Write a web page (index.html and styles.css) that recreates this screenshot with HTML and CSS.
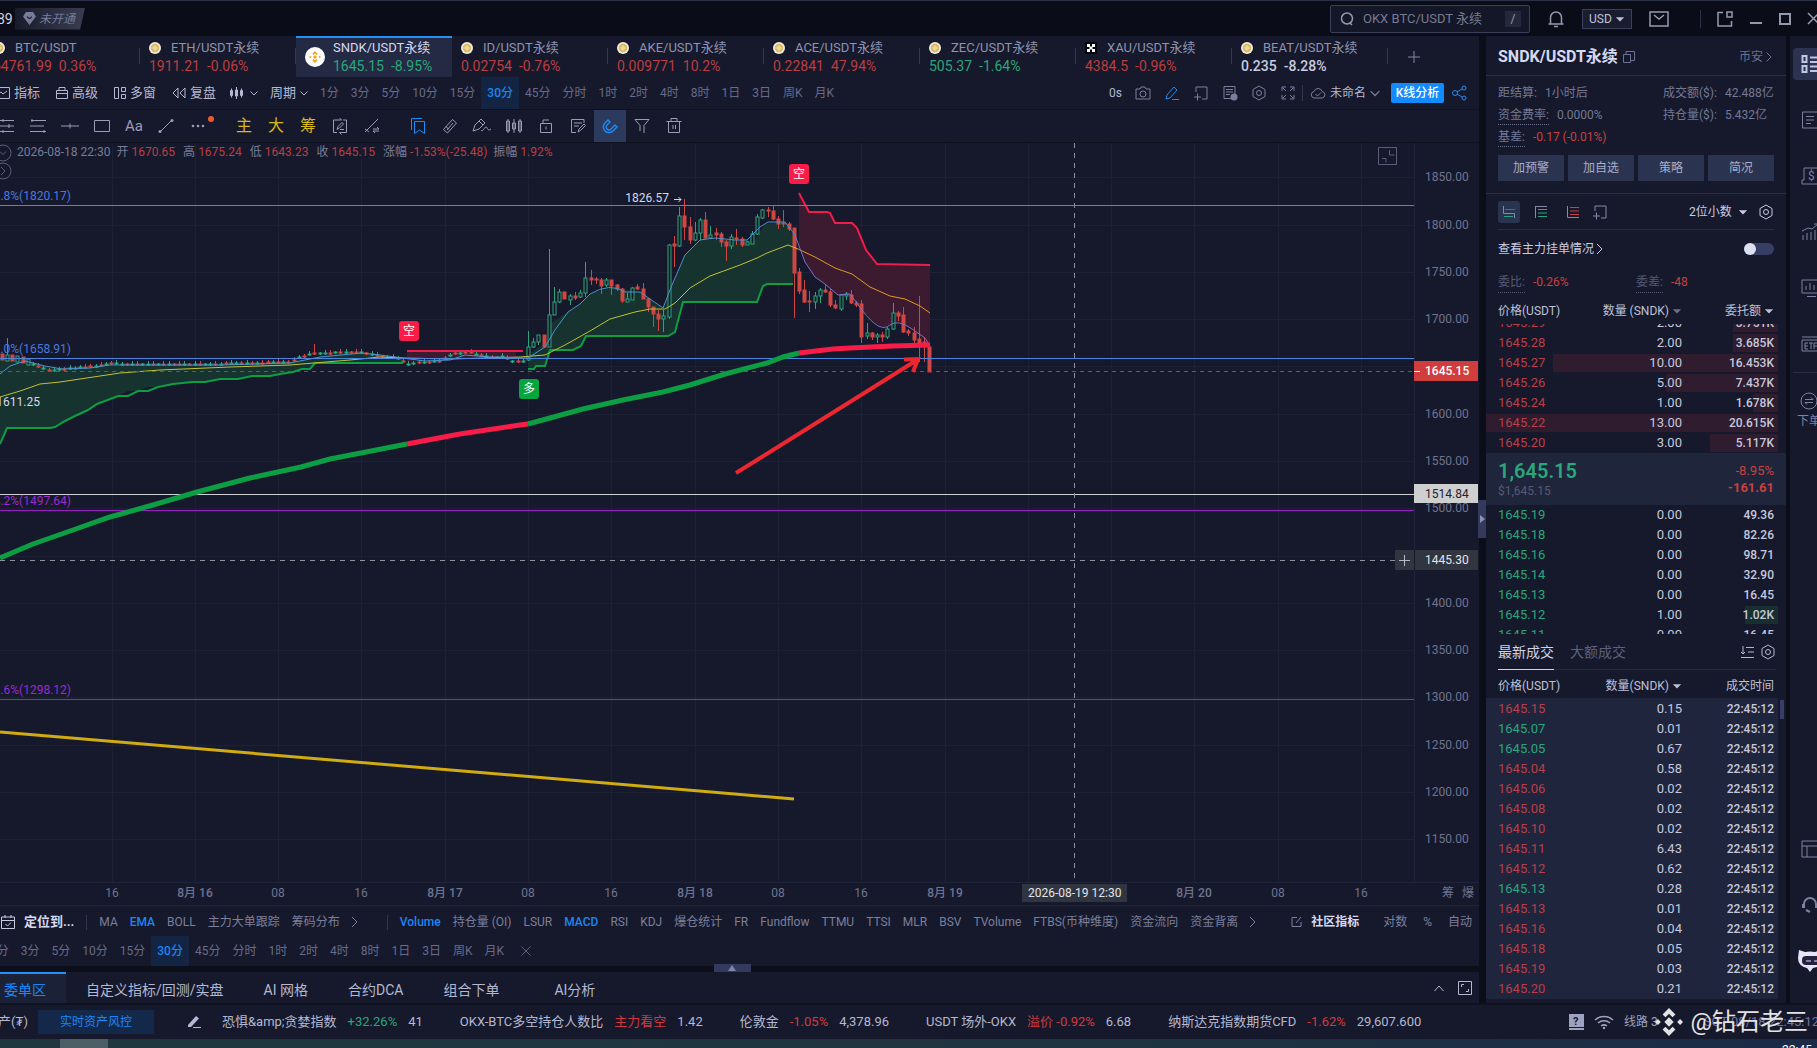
FILE: index.html
```html
<!DOCTYPE html>
<html lang="zh-CN">
<head>
  <meta charset="UTF-8" />
  <meta name="viewport" content="width=device-width, initial-scale=1.0" />
  <title>SNDK/USDT永续</title>
  <link rel="stylesheet" href="styles.css">
</head>
<body>
  <svg class="sprite" aria-hidden="true">
    <symbol id="i-chev" viewBox="0 0 8 8"><path d="M0.5 2.5l3.5 3.5l3.5-3.5" /></symbol>
    <symbol id="i-next" viewBox="0 0 8 14"><path d="M1 2l5 5l-5 5" /></symbol>
    <symbol id="i-arrow" viewBox="0 0 12 8"><path class="solid" d="M1 2h10l-5 5z" /></symbol>
    <symbol id="i-hex" viewBox="0 0 16 16"><path d="M8 1l6 3.5v7L8 15l-6-3.5v-7z" /><circle cx="8" cy="8" r="2.5" /></symbol>
    <symbol id="i-edit" viewBox="0 0 16 16"><path d="M2 14l1-4l7-8l3 3l-7 8zM8 14.500h7" /></symbol>
    <symbol id="i-addbox" viewBox="0 0 16 16"><path d="M3 7V2h11v12H9M1 12h7M4.500 8.500v7" /></symbol>
    <symbol id="i-coin" viewBox="0 0 20 20"><circle cx="10" cy="10" r="10" fill="#f1ecdc" stroke="none" /><circle cx="10" cy="10" r="7" fill="#dcb85c" stroke="none" /><path d="M10 5l5 5l-5 5l-5-5z" fill="#e9d9a4" stroke="none" /></symbol>
    <symbol id="i-bnb" viewBox="0 0 24 24"><path class="solid" d="M12 0l5.500 5.500l-2.500 2.500l-3-3l-3 3l-2.500-2.500zM12 24l5.500-5.500l-2.500-2.500l-3 3l-3-3l-2.500 2.500zM2.500 9.500L5 12l-2.500 2.500L0 12zM21.500 9.500L24 12l-2.500 2.500L19 12zM12 8l4 4l-4 4l-4-4z" /></symbol>
  </svg>

  <div class="app">
    <header class="titlebar">
      <span class="uid">89</span>
      <span class="vip"><svg width="13" height="13" viewBox="0 0 13 13"><path class="solid" fill-rule="evenodd" d="M3 0h7l3 4.500L6.500 13L0 4.500zM4 4l2.500 2l2.500-2v1.500L6.500 7.500L4 5.500z" /></svg><span>未开通</span></span>
      <label class="search">
        <svg width="16" height="16" viewBox="0 0 16 16"><circle cx="8" cy="7.500" r="5.500" stroke-width="1.500" /><path d="M11 12l2 2" stroke-width="1.500" /></svg>
        <input type="text" placeholder="OKX BTC/USDT 永续" aria-label="搜索">
        <kbd>/</kbd>
      </label>
      <svg class="bell" width="18" height="18" viewBox="0 0 18 18" stroke-width="1.500"><path d="M1.500 14h15M3.500 14V7.500a5.500 5.500 0 0 1 11 0V14M7 16.500h4" /></svg>
      <span class="currency"><select aria-label="计价货币"><option>USD</option></select><svg width="10" height="8"><use href="#i-arrow" /></svg></span>
      <svg class="mail" width="20" height="16" viewBox="0 0 20 16" stroke-width="1.500"><path d="M1 1h18v14H1zM5 4l5 4l5-4" /></svg>
      <span class="vsep"></span>
      <svg class="win" width="16" height="16" viewBox="0 0 16 16" stroke-width="1.500"><path d="M6 1.500H1v13.500h13.500V10M10 1h5v5h-5z" /></svg>
      <svg class="win" width="14" height="16" viewBox="0 0 14 16" stroke-width="2"><path d="M1 12h12" /></svg>
      <svg class="win" width="12" height="12" viewBox="0 0 12 12" stroke-width="2"><path d="M1 1h10v10H1z" /></svg>
      <svg class="win" width="13" height="13" viewBox="0 0 13 13" stroke-width="1.500"><path d="M1 1l11 11M12 1L1 12" /></svg>
    </header>

    <div class="main">
      <div class="workspace">
        <nav class="pairs" id="pairs"></nav>

        <div class="bar tools">
          <button><svg width="12" height="12" viewBox="0 0 12 12"><path d="M0 .5h11.500v11H0M0 7l3-2l2 2l4-3" /></svg>指标</button>
          <button><svg width="12" height="12" viewBox="0 0 12 12"><path d="M.5 3.500h11v8H.5zM.5 6.500h11M3 3.500v-3h6v3" /></svg>高级</button>
          <button><svg width="12" height="12" viewBox="0 0 12 12"><path d="M.5.5h4v11h-4zM7.500.5h4v4h-4zM7.500 7.500h4v4h-4z" /></svg>多窗</button>
          <button><svg width="14" height="12" viewBox="0 0 14 12"><path d="M6 1L1 6l5 5zM13 1L8 6l5 5z" /></svg>复盘</button>
          <button class="kind" aria-label="图表类型"><svg width="13" height="12" viewBox="0 0 13 12"><path d="M.5 3.500h2v5h-2zM1.500 1.500v9M5.500 3h2v6h-2zM6.500 0v12M10.500 3.500h2v5h-2zM11.500 1.500v9" /></svg><svg width="8" height="8"><use href="#i-chev" /></svg></button>
          <button>周期<svg width="8" height="8"><use href="#i-chev" /></svg></button>
          <div class="frames" id="frames-top"></div>
          <div class="tools-right">
            <span class="lag">0s</span>
            <svg width="16" height="16" viewBox="0 0 16 16"><path d="M1 4h4l1-2h4l1 2h4v10H1z" /><circle cx="8" cy="9" r="3" /></svg>
            <svg class="blue" width="16" height="16"><use href="#i-edit" /></svg>
            <svg width="16" height="16"><use href="#i-addbox" /></svg>
            <svg width="16" height="16" viewBox="0 0 16 16"><path d="M2 1.500h11v12H2zM4 4.500h7M4 7h7M4 9.500h4" /><circle class="solid" cx="12" cy="12" r="3.500" /></svg>
            <svg width="16" height="16"><use href="#i-hex" /></svg>
            <svg width="16" height="16" viewBox="0 0 16 16"><path d="M2 6V2h4M10 2h4v4M14 10v4h-4M6 14H2v-4M3 3l3 3M13 3l-3 3M13 13l-3-3M3 13l3-3" /></svg>
            <span class="layout"><svg width="16" height="14" viewBox="0 0 16 14"><path d="M4 12a3.300 3.300 0 0 1 0-6.500a4.300 4.300 0 0 1 8.200 0a3.300 3.300 0 0 1 0 6.500zM5.500 8l2 2l3.500-3.500" /></svg><b>未命名</b><svg width="10" height="10"><use href="#i-chev" /></svg></span>
            <button class="primary">K线分析</button>
            <svg class="blue" width="15" height="16" viewBox="0 0 15 16"><circle cx="3" cy="8" r="2.500" /><circle cx="12" cy="3" r="2" /><circle cx="12" cy="13" r="2" /><path d="M5 7l5-3M5 9l5 3" /></svg>
          </div>
        </div>

        <div class="bar draw">
          <button aria-label="平行线"><svg width="18" height="16" viewBox="0 0 18 16"><path d="M1 2.500h16M1 8h16M1 13.500h16M6 1v3M12 6v4M6 12v3" /></svg></button>
          <button aria-label="斐波那契"><svg width="18" height="16" viewBox="0 0 18 16"><path d="M2 2.500h15M1 8h14M1 13.500h16M3 1v3M15 12v3" /></svg></button>
          <button aria-label="水平线"><svg width="18" height="16" viewBox="0 0 18 16"><path d="M0 8h18M9 5.500v5" /></svg></button>
          <button aria-label="矩形"><svg width="18" height="16" viewBox="0 0 18 16"><path d="M1.500 2.500h15v11h-15z" /></svg></button>
          <button class="aa">Aa</button>
          <button aria-label="线段"><svg width="18" height="16" viewBox="0 0 18 16"><path d="M3 14L15 2" /><circle class="solid" cx="15" cy="2.500" r="1.500" /><circle class="solid" cx="3" cy="13.500" r="1.500" /></svg></button>
          <button class="more" aria-label="更多"><svg width="14" height="4" viewBox="0 0 14 4"><circle class="solid" cx="2" cy="2" r="1.300" /><circle class="solid" cx="7" cy="2" r="1.300" /><circle class="solid" cx="12" cy="2" r="1.300" /></svg></button>
          <span class="gap"></span>
          <button class="gold">主</button>
          <button class="gold">大</button>
          <button class="gold">筹</button>
          <button aria-label="循环绘制"><svg width="18" height="18" viewBox="0 0 18 18"><path d="M6 15.500H2.500V3h8l-2-2M12 3h3.500v12.500h-7l2 2M6 12.500l1-3l4-4l1.500 1.500l-4 4zM9 12.500h4" /></svg></button>
          <button aria-label="切换线"><svg width="18" height="18" viewBox="0 0 18 18"><path d="M2 15L15 2M2 12l4 3M10 12h6l-2-2M16 14h-6l2 2" /></svg></button>
          <span class="gap"></span>
          <button class="blue" aria-label="书签"><svg width="18" height="18" viewBox="0 0 18 18"><path d="M5.500 4.500h10v12l-5-3.500l-5 3.500zM2.500 13V1.500H13" /></svg></button>
          <button aria-label="尺"><svg width="18" height="18" viewBox="0 0 18 18"><path d="M2.500 12.500L11.500 2.500l4 3.500l-9 10zM6 13l6-7M5 9.500l3 3" /></svg></button>
          <button aria-label="画笔"><svg width="20" height="18" viewBox="0 0 20 18"><path d="M1 14l2-6l6-6l4 4l-6 6l-6 2M9 13c2 3 3-3 5-3s1 5 5 2M7 4l4 4" /></svg></button>
          <button aria-label="K线"><svg width="18" height="18" viewBox="0 0 18 18"><path d="M1.500 4h3v10h-3zM7.500 6h3v6h-3zM13.500 4h3v10h-3zM3 2v14M9 2v14M15 2v14" /></svg></button>
          <button aria-label="锁定"><svg width="18" height="18" viewBox="0 0 18 18"><path d="M3.500 6.500h11v9h-11zM6 6.500V3h6M9 9.500v3" /></svg></button>
          <button aria-label="笔记"><svg width="18" height="18" viewBox="0 0 18 18"><path d="M15 6V2.500H2.500v13H7M5 6h8M5 9h5M9 15l1-3l5-5l1.500 1.500l-5 5z" /></svg></button>
          <button class="blue on" aria-label="磁铁"><svg width="18" height="18" viewBox="0 0 18 18"><path stroke-width="1.400" d="M7 3L4 6a5.500 5.500 0 0 0 8 8l4-4l-2-2l-4 4a2.600 2.600 0 0 1-4-4l3-3z" /></svg></button>
          <button aria-label="筛选"><svg width="18" height="18" viewBox="0 0 18 18"><path d="M2 2.500h14l-5 6V16M2 2.500l5 6V14" /></svg></button>
          <button aria-label="删除"><svg width="18" height="18" viewBox="0 0 18 18"><path d="M1.500 4.500h15M3.500 4.500v11h11v-11M6 4V1.500h6V4M8 8v4M10.500 8v4" /></svg></button>
        </div>

        <div class="chart">
          <svg id="chart" viewBox="0 143 1479 763" preserveAspectRatio="xMaxYMid slice">
            <g id="grid"></g>
            <g class="fill-up">
              <path d="M0 357L12 358L30 361L50 368L95 366L200 365L290 363L310 358L350 352L403 358V363H315L310 369H302L293 372L280 374L270 376H252L238 379H220L205 382H192L173 384L158 387H148L138 391H128L118 396L105 401L97 404L88 410L75 416L65 421L55 427L50 428H7L0 444z" />
              <path d="M528 355L549 340L552 322L568 312L580 304L590 294L610 287L640 292L663 308L672 285L685 255L700 240L755 240L765 224L785 222L793 235V284H767L763 286L757 302H683L675 332L668 336H586L581 346L573 350H550L545 366H536L534 369H528z" />
            </g>
            <g class="fill-down">
              <path d="M799 193L809 212H827L830 213L835 223H852L857 228L866 250L877 264L930 265V346L912 329L898 322L885 327L875 323L862 310L850 294L838 295L825 284L815 277L805 262L799 245z" />
              <path d="M407 351H516V358H430L407 362z" />
            </g>
            <g id="candles"></g>
            <g class="line up">
              <path d="M0 444L7 428H50L55 427L65 421L75 416L88 410L97 404L105 401L118 396H128L138 391H148L158 387L173 384L192 382H205L220 379H238L252 376H270L280 374L293 372L302 369H310L315 363H403" />
              <path d="M528 369H534L536 366H545L550 350H573L581 346L586 336H668L675 332L683 302H757L763 286L767 284H793" />
            </g>
            <g class="line down">
              <path d="M799 193L809 212H827L830 213L835 223H852L857 228L866 250L877 264L930 265" />
              <path d="M407 351H523" />
            </g>
            <path class="ma yellow" d="M0 397L20 391L40 384L60 382L80 379L120 373L160 370L230 367L290 365L350 360L380 357L403 358L450 359L520 357L545 355L565 345L590 331L610 319L635 312L650 309L665 309L675 303L690 288L710 276L740 265L757 258L767 253L788 245L798 249" />
            <path class="ma orange" d="M798 249L815 257L835 268L852 274L870 287L890 296L905 299L920 306L930 313" />
            <path class="ma blue" d="M0 374L10 366L25 361L45 366L62 369L90 368L110 365L180 365L220 365L290 363L320 357L362 353L380 355L403 358L425 361L450 360L465 355L490 357L528 358L545 347L555 330L568 312L580 304L590 294Q610 282 625 292L640 292L663 308L672 285L685 255L700 240L715 238L735 240L747 240L760 227L768 222H785L795 235" />
            <path class="ma violet" d="M795 235L805 262L815 277L825 284L838 295L850 294L862 310Q880 334 890 325Q898 319 912 329L925 338L930 346" />
            <g class="levels">
              <path class="lv-blue" d="M0 205.500H1414M0 358.500H1414" />
              <path class="lv-purple" d="M0 510.500H1414M0 699.500H1414" />
              <path class="lv-white" d="M0 494.500H1414" />
              <path class="lv-last" d="M0 371.500H1414" />
            </g>
            <path class="thick up" d="M0 558L33 544L73 530L110 517L153 505L197 492L250 478L301 467L330 459L361 453L407 444" />
            <path class="thick down" d="M407 444L460 434L520 425L528 424" />
            <path class="thick up" d="M528 424L583 409L623 400L663 392L690 385L725 374L767 363L783 357L799 353" />
            <path class="thick down" d="M799 353L833 349L850 348L893 346L930 345" />
            <path class="trend" d="M0 732L794 799" />
            <path class="arrow" d="M736 473L917 360M904 359.500L918 359L913 372" />
            <g class="crosshair"><path d="M1074.500 143V882M0 560.500H1395" /></g>
            <g class="tag">
              <rect class="t-down" x="399" y="321" width="20" height="20" rx="3" /><text x="409" y="335">空</text>
              <rect class="t-down" x="789" y="164" width="20" height="20" rx="3" /><text x="799" y="178">空</text>
              <rect class="t-up" x="519" y="379" width="20" height="20" rx="3" /><text x="529" y="393">多</text>
            </g>
            <g class="fib">
              <text x="71" y="200">61.8%(1820.17)</text>
              <text x="71" y="353">50.0%(1658.91)</text>
              <text class="p" x="71" y="505">38.2%(1497.64)</text>
              <text class="p" x="71" y="694">23.6%(1298.12)</text>
            </g>
            <text class="mark" x="669" y="202">1826.57</text>
            <path class="tip" d="M674 199.500h7M678.500 197l2.500 2.500l-2.500 2.500" />
            <text class="mark" x="40" y="406">1611.25</text>
            <g id="axis"></g>
            <path class="frame" d="M0 882.500H1479M0 905.500H1479M1414.500 143V882" />
            <g class="labels">
              <rect x="1414" y="361" width="64" height="20" fill="#d03d3d" /><path d="M1414 371.500h6" stroke="#fff" /><text class="bright" x="1425" y="375">1645.15</text>
              <rect x="1414" y="484" width="64" height="19" fill="#cfcfcf" /><text class="dark" x="1425" y="498">1514.84</text>
              <rect x="1395" y="550" width="83" height="20" fill="#31353f" /><path d="M1414.500 550v20" stroke="#16192b" /><path d="M1399 560.500h11M1404.500 555v11" stroke="#b5b8c6" /><text x="1425" y="564">1445.30</text>
              <rect x="1022" y="884" width="105" height="18" fill="#31353f" /><text x="1028" y="897">2026-08-19 12:30</text>
            </g>
            <path class="shrink" d="M1378.500 147.500h18v17h-18zM1389.500 150v5h5M1382 158.500h4v4" />
            <g class="toggles"><circle cx="3" cy="153" r="8" /><path d="M0 151.500l3 3l3-3" /><circle cx="3" cy="171" r="8" /><path d="M1 167l4 4l-4 4" /></g>
          </svg>
          <div class="ohlc">
            <span>2026-08-18 22:30</span>
            <span>开<b>1670.65</b></span><span>高<b>1675.24</b></span><span>低<b>1643.23</b></span><span>收<b>1645.15</b></span>
            <span class="tight">涨幅<b>-1.53%(-25.48)</b></span><span class="tight">振幅<b>1.92%</b></span>
          </div>
        </div>

        <div class="bar indicators">
          <svg class="cal" width="16" height="16" viewBox="0 0 16 16"><path d="M1.500 3h13v11.500h-13zM1.500 6.500h13M5 1v3M11 1v3M5.500 10l2 2l3.500-3.500" /></svg>
          <button class="goto">定位到...</button>
          <span class="divide"></span>
          <div class="chips" id="chips-main"></div>
          <svg width="8" height="14"><use href="#i-next" /></svg>
          <span class="divide wide"></span>
          <div class="chips" id="chips-sub"></div>
          <svg width="8" height="14"><use href="#i-next" /></svg>
          <div class="scale">
            <svg width="12" height="12" viewBox="0 0 12 12"><path d="M6 1.500H1v9h9V6M5 7l5-6" /></svg>
            <button class="goto community">社区指标</button>
            <button>对数</button><button>%</button><button>自动</button>
          </div>
        </div>
        <div class="bar periods">
          <div class="frames" id="frames-bottom"></div>
          <svg width="10" height="10" viewBox="0 0 10 10"><path d="M.5.5l9 9M9.500.5l-9 9" /></svg>
        </div>
        <div class="splitter"><button aria-label="展开"><svg width="8" height="6" viewBox="0 0 8 6"><path class="solid" d="M0 6h8L4 0z" /></svg></button></div>
        <nav class="bottom-tabs">
          <a href="#" class="on">委单区</a><a href="#">自定义指标/回测/实盘</a><a href="#">AI 网格</a><a href="#">合约DCA</a><a href="#">组合下单</a><a href="#" class="last">AI分析</a>
          <svg class="up-chev" width="10" height="10" viewBox="0 0 10 10"><path d="M.5 8L5 3l4.500 5" /></svg>
          <svg width="14" height="14" viewBox="0 0 14 14"><path d="M.5.5h13v13H.5zM3.500 6V3.500H6M10.500 8v2.500H8" /></svg>
        </nav>
      </div>

      <button class="collapse" aria-label="收起"><svg width="5" height="8" viewBox="0 0 5 8"><path class="solid" d="M0 0v8l5-4z" /></svg></button>

      <aside class="side">
        <div class="side-head">
          <h1>SNDK/USDT永续</h1>
          <svg width="12" height="12" viewBox="0 0 12 12"><path d="M.5 3.500h7v8h-7zM3 3V.5h8.500v9H8" /></svg>
          <a href="#">币安<svg width="6" height="12" viewBox="0 0 6 12"><path d="M.5 1.500L5 6L.5 10.500" /></svg></a>
        </div>
        <div class="info">
          <dl>
            <div><dt>距结算:</dt><dd>1小时后</dd></div><div><dt>成交额($):</dt><dd>42.488亿</dd></div>
            <div><dt class="dot">资金费率:</dt><dd>0.0000%</dd></div><div><dt>持仓量($):</dt><dd>5.432亿</dd></div>
            <div><dt class="dot">基差:</dt><dd class="red">-0.17 (-0.01%)</dd></div>
          </dl>
          <div class="actions"><button>加预警</button><button>加自选</button><button>策略</button><button>简况</button></div>
        </div>
        <div class="book-tools">
          <button class="on" aria-label="买卖盘"><svg width="12" height="12" viewBox="0 0 12 12"><path d="M.5 0v7.500H11.500v4.500" /><path d="M2 3.500h10" stroke="#b83f45" /><path d="M1 10.500h9" stroke="#2ca57b" /></svg></button>
          <button aria-label="买盘"><svg width="12" height="12" viewBox="0 0 12 12"><path d="M0 .5h12M.5 0v12" /><path d="M3 3.500h9M3 7h9M3 10.500h9" stroke="#2ca57b" /></svg></button>
          <button aria-label="卖盘"><svg width="12" height="12" viewBox="0 0 12 12"><path d="M.5 0v11.500H12" /><path d="M3 1.500h9M3 5h9M3 8.500h9" stroke="#d03d45" /></svg></button>
          <button aria-label="添加"><svg width="16" height="16"><use href="#i-addbox" /></svg></button>
          <select aria-label="精度"><option>2位小数</option></select>
          <svg class="caret" width="10" height="8"><use href="#i-arrow" /></svg>
          <svg class="gear" width="16" height="16"><use href="#i-hex" /></svg>
        </div>
        <div class="switch-row">
          <label for="whales">查看主力挂单情况</label>
          <svg width="8" height="14"><use href="#i-next" /></svg>
          <input type="checkbox" id="whales">
        </div>
        <div class="ratio"><div><span>委比:</span><b>-0.26%</b></div><div><span>委差:</span><b>-48</b></div></div>
        <div class="thead"><span>价格(USDT)</span><span>数量 (SNDK)<svg class="dim" width="10" height="8"><use href="#i-arrow" /></svg></span><span>委托额<svg width="10" height="8"><use href="#i-arrow" /></svg></span></div>
        <div class="book asks"><table id="asks"></table></div>
        <div class="last-price">
          <div><strong>1,645.15</strong><small>$1,645.15</small></div>
          <div class="chg"><span>-8.95%</span><b>-161.61</b></div>
        </div>
        <div class="book bids"><table id="bids"></table></div>
        <div class="trade-tabs">
          <a href="#" class="on">最新成交</a><a href="#">大额成交</a>
          <svg width="14" height="14" viewBox="0 0 14 14"><path d="M6 2.500h8M8 7h6M1 12.500h13M3 1v8M1 7l2 2l2-2" /></svg>
          <svg width="16" height="16"><use href="#i-hex" /></svg>
        </div>
        <div class="thead short"><span>价格(USDT)</span><span>数量(SNDK)<svg width="10" height="8"><use href="#i-arrow" /></svg></span><span>成交时间</span></div>
        <div class="trades"><table id="trades"></table></div>
      </aside>

      <nav class="rail">
        <a href="#" class="on" aria-label="盘口"><svg width="20" height="20" viewBox="0 0 20 20" stroke-width="2"><path d="M1.500 2h4v6h-4zM1.500 12h4v6h-4zM9 3.500h10M9 8h10M9 12.500h10M9 17h10" /></svg></a>
        <a href="#" aria-label="资讯"><svg width="20" height="20" viewBox="0 0 20 20"><path d="M1.500 2h15v16h-15zM5 6.500h8M5 10h8M5 13.500h5" /></svg></a>
        <a href="#" aria-label="资产"><svg width="20" height="20" viewBox="0 0 20 20"><path d="M3 2h14v16H1v-4h2z" /><text x="7" y="14">$</text></svg></a>
        <a href="#" aria-label="数据"><svg width="20" height="20" viewBox="0 0 20 20"><path d="M2 18v-5M6 18v-7M10 18v-8M14 18V8M1 9l6-3l4 1l6-5M13 2h4v4" /></svg></a>
        <a href="#" aria-label="行情"><svg width="20" height="20" viewBox="0 0 20 20"><path d="M1 2h18v13H1zM6 18.500h9M5 8v4M9 5v7M13 7v5" /></svg></a>
        <a href="#" aria-label="ETF"><svg width="20" height="20" viewBox="0 0 20 20"><path d="M1 3h18M1 6h18v11H1zM4 9v6M4 9h3M4 12h3M4 15h3M8 9h4M10 9v6M13 15V9h3M13 12h3" /></svg></a>
        <a href="#" class="order"><svg width="20" height="20" viewBox="0 0 20 20"><circle cx="9" cy="10" r="8" /><path d="M5 8.500h8l-2-2M13 11.500H5l2 2" /></svg>下单</a>
        <a href="#" class="push" aria-label="布局"><svg width="20" height="20" viewBox="0 0 20 20"><path d="M1 2h18v16H1zM1 7h18M6 7v11" /></svg></a>
        <a href="#" aria-label="客服"><svg width="20" height="20" viewBox="0 0 20 20" stroke-width="2"><path d="M3 13V9a6 6 0 0 1 12 0v4M2 9v4M16 9v4M5 15l4 2" /></svg></a>
        <a href="#" class="bot" aria-label="助手"><svg width="26" height="24" viewBox="0 0 26 24"><path d="M2 1l6 2q5-1 10 0l6-2v6q2 7-4 11l-4 1l-3 4l-3-4q-9-2-9-10z" fill="#e5e3f4" stroke="none" /><rect x="5" y="7" width="20" height="9" rx="4" fill="#252141" stroke="none" /><path d="M9 12h5M17 12h5" stroke="#e5e3f4" /></svg></a>
      </nav>
    </div>

    <footer class="status">
      <span class="asset">产(₮)</span>
      <button class="risk">实时资产风控</button>
      <svg class="pen" width="14" height="14" viewBox="0 0 14 14"><path class="solid" d="M1 10L9 1l3 2.500L4 12H1zM6 12h8v1H6z" /></svg>
      <div class="quote"><span>恐惧&amp;amp;贪婪指数</span><b class="green">+32.26%</b><span>41</span></div>
      <div class="quote"><span>OKX-BTC多空持仓人数比</span><b>主力看空</b><span>1.42</span></div>
      <div class="quote"><span>伦敦金</span><b>-1.05%</b><span>4,378.96</span></div>
      <div class="quote"><span>USDT 场外-OKX</span><b>溢价 -0.92%</b><span>6.68</span></div>
      <div class="quote"><span>纳斯达克指数期货CFD</span><b>-1.62%</b><span>29,607.600</span></div>
      <div class="net">
        <svg width="15" height="16" viewBox="0 0 15 16"><path class="solid" d="M0 0h15v13H0zM0 14h15v2H0z" /><text x="4" y="11">?</text></svg>
        <svg width="20" height="16" viewBox="0 0 20 16" stroke-width="1.500"><path d="M1 6a13 13 0 0 1 18 0M4 9a9 9 0 0 1 12 0M7 12a5 5 0 0 1 6 0" /><circle class="solid" cx="10" cy="14" r="1.200" /></svg>
        <span>线路 3</span>
        <time>SGT 08/18 22:45:12</time>
      </div>
      <div class="watermark"><svg width="28" height="28"><use href="#i-bnb" /></svg>@钻石老三</div>
    </footer>
    <div class="taskbar"><span class="task"></span><time>22:45</time></div>
  </div>

  <script>
    const el = id => document.getElementById(id);

    // pair tabs
    const pairs = [
      ['BTC/USDT', '64761.99', '0.36%', 'red'],
      ['ETH/USDT永续', '1911.21', '-0.06%', 'red'],
      ['SNDK/USDT永续', '1645.15', '-8.95%', 'green on'],
      ['ID/USDT永续', '0.02754', '-0.76%', 'red'],
      ['AKE/USDT永续', '0.009771', '10.2%', 'red'],
      ['ACE/USDT永续', '0.22841', '47.94%', 'red'],
      ['ZEC/USDT永续', '505.37', '-1.64%', 'green'],
      ['XAU/USDT永续', '4384.5', '-0.96%', 'red okx'],
      ['BEAT/USDT永续', '0.235', '-8.28%', 'flat']
    ];
    const okx = '<svg class="coin" viewBox="0 0 12 12"><path fill="#05070c" stroke="none" d="M0 0h12v12H0z"/><path fill="#fff" stroke="none" d="M2 2h3v3H2zM7 2h3v3H7zM4.500 4.500h3v3h-3zM2 7h3v3H2zM7 7h3v3H7z"/></svg>';
    const coin = '<svg class="coin"><use href="#i-coin"/></svg>';
    const big = '<svg class="coin" viewBox="0 0 20 20"><circle cx="10" cy="10" r="10" fill="#fff" stroke="none"/><svg x="4" y="4" width="12" height="12" color="#f0a51c"><use href="#i-bnb"/></svg></svg>';
    el('pairs').innerHTML = pairs.map(([name, price, chg, cls]) => {
      const icon = cls.includes('okx') ? okx : cls.includes('on') ? big : coin;
      return `<a href="#" class="pair ${cls}">${icon}<span class="name">${name}</span><span class="px">${price}<i>${chg}</i></span></a>`;
    }).join('') + '<button class="add" aria-label="添加"><svg width="12" height="12" viewBox="0 0 12 12"><path d="M0 6h12M6 0v12"/></svg></button>';

    // time frames
    const frames = ['1分', '3分', '5分', '10分', '15分', '30分', '45分', '分时', '1时', '2时', '4时', '8时', '1日', '3日', '周K', '月K'];
    const frameHtml = frames.map(f => `<button${f === '30分' ? ' class="on"' : ''}>${f}</button>`).join('');
    el('frames-top').innerHTML = frameHtml;
    el('frames-bottom').innerHTML = frameHtml;

    const chips = (list, on) => list.map(c => `<button${on.includes(c) ? ' class="on"' : ''}>${c}</button>`).join('');
    el('chips-main').innerHTML = chips(['MA', 'EMA', 'BOLL', '主力大单跟踪', '筹码分布'], ['EMA']);
    el('chips-sub').innerHTML = chips(['Volume', '持仓量 (OI)', 'LSUR', 'MACD', 'RSI', 'KDJ', '爆仓统计', 'FR', 'Fundflow', 'TTMU', 'TTSI', 'MLR', 'BSV', 'TVolume', 'FTBS(币种维度)', '资金流向', '资金背离'], ['Volume', 'MACD']);

    // order book: price, amount, total, bar width
    const asks = [['1645.29', '2.00', '3.751K', 45], ['1645.28', '2.00', '3.685K', 45], ['1645.27', '10.00', '16.453K', 225], ['1645.26', '5.00', '7.437K', 112], ['1645.24', '1.00', '1.678K', 25], ['1645.22', '13.00', '20.615K', 292], ['1645.20', '3.00', '5.117K', 68]];
    const bids = [['1645.19', '0.00', '49.36', 0], ['1645.18', '0.00', '82.26', 0], ['1645.16', '0.00', '98.71', 0], ['1645.14', '0.00', '32.90', 0], ['1645.13', '0.00', '16.45', 0], ['1645.12', '1.00', '1.02K', 33], ['1645.11', '0.00', '16.45', 0]];
    const bookRow = r => `<tr style="--w:${r[3]}px"><td>${r[0]}</td><td>${r[1]}</td><td>${r[2]}</td></tr>`;
    el('asks').innerHTML = asks.map(bookRow).join('');
    el('bids').innerHTML = bids.map(bookRow).join('');

    const trades = [['15', '0.15'], ['07', '0.01', 1], ['05', '0.67', 1], ['04', '0.58'], ['06', '0.02'], ['08', '0.02'], ['10', '0.02'], ['11', '6.43'], ['12', '0.62'], ['13', '0.28', 1], ['13', '0.01'], ['16', '0.04'], ['18', '0.05'], ['19', '0.03'], ['20', '0.21']];
    el('trades').innerHTML = trades.map(t => `<tr${t[2] ? ' class="buy"' : ''}><td>1645.${t[0]}</td><td>${t[1]}</td><td>22:45:12</td></tr>`).join('');

    // grid and axes
    const priceY = p => Math.round(205.5 + (1820.17 - p) * 0.9457);
    let grid = '', axis = '';
    for (let p = 1850; p >= 1150; p -= 50) {
      grid += `<path d="M0 ${priceY(p)}.5H1414"/>`;
      if (p !== 1650 && p !== 1450) axis += `<text x="1425" y="${priceY(p) + 4}">${p}.00</text>`;
    }
    const hours = ['16', '8月 16', '08', '16', '8月 17', '08', '16', '8月 18', '08', '16', '8月 19', '', '', '8月 20', '08', '16'];
    hours.forEach((h, i) => {
      const x = Math.round(111.5 + i * 83.3);
      grid += `<path d="M${x}.5 143V882"/>`;
      axis += `<text class="hour${h.length > 2 ? ' day' : ''}" x="${x}" y="897">${h}</text>`;
    });
    axis += '<text x="1442" y="897">筹</text><text x="1462" y="897">爆</text>';
    el('grid').innerHTML = grid;
    el('axis').innerHTML = axis;

    // candles: body top, body bottom, high, low, rising
    const data = [
      [347,360,331,361,1],[342,347,338,348,1],[335,342,335,345,1],[335,347,335,348,0],[315,347,249,347,1],[302,315,287,315,1],[292,302,289,303,1],[292,299,292,299,0],
      [296,300,294,305,1],[296,298,292,300,0],[293,297,290,298,1],[278,293,262,297,1],[278,280,270,285,0],[279,280,277,284,0],[280,286,278,294,0],[280,285,278,287,1],
      [280,286,280,295,0],[285,289,284,291,0],[289,301,288,303,0],[299,302,293,302,1],[288,300,287,300,1],[287,289,284,290,0],[289,299,283,299,0],[299,307,298,312,0],
      [307,314,307,327,0],[314,319,310,331,0],[316,319,310,332,1],[245,317,244,319,1],[244,246,236,267,0],[216,246,207,247,1],[216,227,199,240,0],[227,240,217,244,0],
      [233,240,222,241,1],[220,233,218,240,1],[220,238,212,239,0],[235,238,226,239,1],[233,235,228,240,0],[234,242,232,247,0],[242,246,240,261,0],[237,246,234,249,1],
      [238,239,229,245,0],[239,245,237,247,0],[242,245,241,245,1],[234,244,231,244,1],[217,234,214,235,1],[210,218,209,219,1],[210,211,207,217,0],[211,219,205,220,0],
      [219,224,216,229,0],[223,224,210,227,0],[224,229,222,231,0],[228,273,228,318,0],[272,291,268,294,0],[290,302,280,303,0],[301,302,291,312,0],[296,302,292,309,1],
      [290,296,288,303,1],[290,292,285,293,0],[292,305,289,307,0],[305,308,300,309,0],[295,309,294,311,1],[294,296,292,300,1],[295,303,290,304,0],[303,305,301,307,0],
      [304,337,300,343,0],[333,336,323,339,1],[333,337,332,340,0],[335,337,333,343,1],[335,337,332,342,0],[329,337,327,339,1],[313,329,303,330,1],[313,316,311,321,0],
      [315,332,307,333,0],[331,333,329,336,0],[333,340,327,343,0],[339,343,296,362,0],[342,345,337,362,0],[347,372,345,372,0]
    ];
    // quiet stretch before the breakout
    const path = [[0,357],[10,358],[25,360],[38,366],[50,370],[75,368],[95,366],[110,363],[130,364],[200,364],[290,362],[300,357],[315,353],[350,352],[362,352],[380,356],[400,358],[408,364],[420,362],[440,361],[455,353],[470,352],[490,357],[505,356],[512,361],[525,361]];
    const mid = x => {
      const i = Math.max(1, path.findIndex(p => p[0] >= x));
      const [a, b] = [path[i - 1], path[i]];
      return a[1] + (b[1] - a[1]) * (x - a[0]) / (b[0] - a[0]);
    };
    const candle = (x, [top, bottom, high, low, up]) =>
      `<g class="${up ? 'c-up' : 'c-down'}"><path d="M${x} ${high}V${top}M${x} ${bottom}V${low}"/><rect x="${x - 1.5}" y="${top}" width="3" height="${Math.max(1, bottom - top)}"/></g>`;
    let out = '';
    for (let i = -101; i < 0; i++) {
      const x = Math.round(528 + i * 5.21) + 0.5;
      if (x < 0) continue;
      const m = Math.round(mid(x)), s = Math.abs(Math.sin(i * 7.3)), up = Math.sin(i * 3.7) > 0;
      const body = x < 30 ? 6 : 1;
      const high = i === -100 ? 338 : i === -41 ? 344 : m - 1 - Math.round(s * 2);
      out += candle(x, [m - Math.floor(body / 2), m + Math.ceil(body / 2), high, m + 2, up]);
    }
    data.forEach((d, i) => { out += candle(Math.round(528 + i * 5.21) + 0.5, d); });
    el('candles').innerHTML = out;
  </script>
</body>
</html>
```

FILE: styles.css
```css
* {
  box-sizing: border-box;
}

body {
  margin: 0;
  background: #0b0e18;
  color: #b4b8d2;
  font-family: Roboto, "Noto Sans CJK SC", sans-serif;
  font-size: 12px;
  line-height: 16px;
  overflow: hidden;
}

button,
select,
input {
  font: inherit;
  color: inherit;
  background: none;
  border: none;
  padding: 0;
  margin: 0;
  white-space: nowrap;
}

a {
  color: inherit;
  text-decoration: none;
}

svg {
  fill: none;
  stroke: currentColor;
  flex-shrink: 0;
  display: block;
}

svg text {
  fill: currentColor;
  stroke: none;
}

.solid {
  fill: currentColor;
  stroke: none;
}

.sprite {
  position: absolute;
  width: 0;
  height: 0;
}

.app {
  height: 100vh;
  display: flex;
  flex-direction: column;
}

/* title bar */
.titlebar {
  height: 36px;
  border-top: 1px solid #2a3047;
  background: #0a0d17;
  display: flex;
  align-items: center;
  color: #9699ae;
  flex-shrink: 0;
  overflow: hidden;
}

.uid {
  color: #cfd2e4;
  font-size: 14px;
  width: 18px;
  margin-left: -3px;
}

.vip {
  display: flex;
  align-items: center;
  gap: 3px;
  width: 70px;
  height: 22px;
  padding-left: 8px;
  background: linear-gradient(90deg, #171b2b, #3a3d51);
  clip-path: polygon(0 0, 100% 0, 93% 100%, 0 100%);
  color: #777b98;
  font-style: italic;
}

.search {
  margin-left: auto;
  width: 200px;
  height: 28px;
  border: 1px solid #3a3f5c;
  border-radius: 2px;
  background: #141727;
  display: flex;
  align-items: center;
  padding: 0 8px;
  gap: 8px;
}

.search input {
  flex: 1;
  width: 0;
  font-size: 13px;
}

.search input::placeholder {
  color: #767a94;
}

.search kbd {
  width: 16px;
  height: 16px;
  text-align: center;
  background: #25283a;
  font-family: inherit;
}

.bell {
  margin: 0 17px;
}

.currency {
  width: 50px;
  height: 20px;
  border: 1px solid #3a3f5c;
  background: #1a1d30;
  display: flex;
  align-items: center;
  gap: 3px;
  padding-left: 6px;
  color: #c0c3d8;
}

select {
  appearance: none;
}

.mail {
  margin-left: 17px;
}

.vsep {
  width: 1px;
  height: 18px;
  background: #2c3049;
  margin: 0 0 0 31px;
}

.win {
  margin-left: 16px;
}

.win:last-child {
  margin-right: -3px;
}

/* main split */
.main {
  flex: 1;
  min-height: 0;
  display: flex;
}

.workspace {
  flex: 1;
  min-width: 0;
  display: flex;
  flex-direction: column;
  background: #16192b;
}

.pairs {
  display: flex;
  height: 41px;
  margin-left: -16px;
  flex-shrink: 0;
}

.pair {
  position: relative;
  width: 156px;
  height: 41px;
  display: grid;
  grid-template-columns: 22px 1fr;
  grid-template-rows: 18px 18px;
  align-items: center;
  padding: 3px 0 0 9px;
  font-size: 13px;
  color: #8f93b0;
  flex-shrink: 0;
}

.pair::after {
  content: "";
  position: absolute;
  right: 0;
  top: 12px;
  width: 1px;
  height: 16px;
  background: #33384f;
}

.coin {
  width: 12px;
  height: 12px;
}

.px {
  grid-column: 1 / 3;
  font-size: 14px;
  color: #bb3e42;
}

.px i {
  font-style: normal;
  margin-left: 7px;
}

.pair.green .px {
  color: #2ca57b;
}

.pair.flat .px {
  color: #c9cce0;
  font-weight: 500;
}

.pair.on {
  background: #242a44;
  border-top: 2px solid #2290f5;
  grid-template-columns: 28px 1fr;
  padding-top: 1px;
  color: #d6d9ef;
}

.pair.on::after {
  display: none;
}

.pair.on .coin {
  width: 20px;
  height: 20px;
  grid-row: 1 / 3;
}

.pair.on .px {
  grid-column: 2;
}

.add {
  margin-left: 20px;
  color: #8387a5;
}

.bar {
  display: flex;
  align-items: center;
  flex-shrink: 0;
}

/* tool rows */
.tools {
  height: 32px;
  gap: 16px;
  margin-left: -2px;
  padding-right: 12px;
}

.tools > button {
  display: flex;
  align-items: center;
  gap: 4px;
  font-size: 13px;
}

.tools .kind {
  gap: 7px;
  margin: 0 -4px 0 -2px;
}

.frames {
  display: flex;
  height: 100%;
}

.tools .frames {
  margin-left: -10px;
}

.frames button {
  padding: 0 6px;
  color: #676b8c;
}

.frames .on {
  background: #132542;
  color: #1b86f5;
  font-weight: 500;
}

.tools-right {
  margin-left: auto;
  display: flex;
  align-items: center;
  gap: 13px;
  color: #7b7f9c;
}

.lag {
  color: #b4b8d2;
}

.tools-right .blue {
  color: #1f8bf5;
}

.layout {
  display: flex;
  align-items: center;
  gap: 4px;
  border-left: 1px solid #34384f;
  padding-left: 7px;
  margin-left: -7px;
}

.layout b {
  font-weight: 400;
  color: #b4b8d2;
}

.primary {
  width: 53px;
  height: 20px;
  border-radius: 2px;
  background: #148aff;
  color: #fff;
  font-weight: 500;
  margin: 0 -5px 0 -2px;
}

.draw {
  height: 34px;
  border-top: 1px solid #0e111e;
  border-bottom: 1px solid #0e111e;
  margin-left: -10px;
}

.draw button {
  width: 32px;
  height: 32px;
  display: flex;
  align-items: center;
  justify-content: center;
  position: relative;
  color: #9a9db6;
}

.draw .aa {
  font-size: 15px;
}

.draw .gold {
  font-size: 16px;
  color: #d9b81c;
}

.draw .blue {
  color: #1f8bf5;
}

.draw .on {
  background: #2c3a5e;
}

.more::after {
  content: "";
  position: absolute;
  right: 0;
  top: 6px;
  width: 6px;
  height: 6px;
  border-radius: 50%;
  background: #f0592b;
}

.gap {
  width: 14px;
}

/* chart */
.chart {
  flex: 1;
  min-height: 0;
  position: relative;
}

#chart {
  width: 100%;
  height: 100%;
  font-size: 12px;
}

.ohlc {
  position: absolute;
  left: 17px;
  top: 0;
  height: 18px;
  display: flex;
  align-items: center;
  gap: 6px;
  color: #787c98;
}

.ohlc b {
  font-weight: 400;
  color: #b83f45;
  margin: 0 2px 0 3px;
}

.ohlc .tight b {
  margin-right: 0;
}

#grid {
  stroke: #1d2134;
}

#axis {
  color: #6f7392;
}

.hour {
  text-anchor: middle;
}

.day {
  font-weight: 500;
}

.frame {
  stroke: #20243a;
}

.fill-up { fill: #16332f; stroke: none; }
.fill-down { fill: #3c1a2f; stroke: none; }
.line { stroke-width: 2; }
.line.up, .thick.up { stroke: #0d9e43; }
.line.down, .thick.down { stroke: #ee1d4b; }
.thick { stroke-width: 5; }
.thick.down { stroke: #fa1c48; }
.ma.yellow { stroke: #c3c033; }
.ma.orange { stroke: #e09a20; }
.ma.blue { stroke: #4a93cc; }
.ma.violet { stroke: #7e71c6; }
.lv-blue { stroke: #4c84e0; }
.lv-purple { stroke: #9a22c4; }
.lv-white { stroke: #cfd0d6; }
.lv-last { stroke: #a04048; stroke-dasharray: 4 4; }
.trend { stroke: #d1ab12; stroke-width: 3; }
.arrow { stroke: #ec2730; stroke-width: 4; }
.crosshair { stroke: #8f919d; stroke-dasharray: 5 5; }
.c-up { stroke: #2ca57b; fill: #16192b; }
.c-down { stroke: #cf4743; fill: #cf4743; }
.t-down { fill: #fa1c48; stroke: none; }
.t-up { fill: #07a53f; stroke: none; }
.tag { color: #fff; text-anchor: middle; }
.fib { color: #4878dd; text-anchor: end; }
.fib .p { fill: #9a2bd0; }
.mark { color: #d5d8ea; text-anchor: end; }
.tip { stroke: #d5d8ea; }
.labels { color: #e2e4ee; stroke: none; }
.labels .bright { fill: #fff; font-weight: 500; }
.labels .dark { fill: #22242c; }
.shrink, .toggles { stroke: #5a5e78; }

/* indicator rows */
.indicators {
  height: 30px;
  padding: 2px 7px 0 0;
  color: #7b7f9c;
}

.cal {
  color: #c7cae0;
}

.goto {
  margin-left: 8px;
  color: #d6d9ef;
  font-size: 13px;
  font-weight: 700;
}

.goto.community {
  font-size: 12px;
  margin: 0 8px 0 -4px;
}

.divide {
  width: 1px;
  height: 15px;
  background: #30344c;
  margin: 0 12px;
}

.divide.wide {
  margin: 0 12px 0 28px;
}

.chips {
  display: flex;
  gap: 12px;
  margin-right: 11px;
}

.chips .on {
  color: #1b86f5;
  font-weight: 500;
}

.scale {
  margin-left: auto;
  display: flex;
  align-items: center;
  gap: 12px;
}

.scale button + button {
  margin-left: 4px;
}

.periods {
  height: 30px;
  margin-left: -16px;
  color: #5c607c;
}

.periods svg {
  margin-left: 11px;
}

.splitter {
  height: 6px;
  background: #0c0f1a;
  display: flex;
  justify-content: center;
  align-items: flex-end;
  flex-shrink: 0;
  padding-right: 15px;
}

.splitter button {
  width: 37px;
  height: 8px;
  background: #333a5e;
  color: #7e85ad;
  display: flex;
  justify-content: center;
  align-items: center;
}

.bottom-tabs {
  height: 31px;
  display: flex;
  align-items: center;
  font-size: 14px;
  padding-right: 7px;
  flex-shrink: 0;
}

.bottom-tabs a {
  height: 31px;
  line-height: 37px;
  padding: 0 20px;
}

.bottom-tabs .on {
  padding: 0 20px 0 4px;
  border-top: 2px solid #2290f5;
  line-height: 33px;
  background: #1b2237;
  color: #1b86f5;
}

.bottom-tabs .last {
  padding-left: 35px;
}

.up-chev {
  margin: 0 14px 0 auto;
}

/* right panel */
.collapse {
  width: 8px;
  height: 38px;
  margin: 464px 0 0 -1px;
  background: #333a5e;
  color: #8c92b5;
  display: flex;
  align-items: center;
  justify-content: center;
  flex-shrink: 0;
}

.side {
  width: 300px;
  background: #16192b;
  display: flex;
  flex-direction: column;
  flex-shrink: 0;
}

.side > div {
  flex-shrink: 0;
}

.side-head {
  height: 40px;
  display: flex;
  align-items: center;
  padding: 2px 14px 0 12px;
  border-bottom: 1px solid #2a2f47;
  color: #6d7190;
}

.side-head h1 {
  margin: 0 5px 0 0;
  font-size: 16px;
  font-weight: 700;
  color: #d6d9f0;
}

.side-head a {
  margin-left: auto;
  display: flex;
  align-items: center;
  gap: 3px;
}

.info {
  height: 118px;
  padding: 6px 12px 0;
  border-bottom: 1px solid #2a2f47;
}

.info dl {
  margin: 0 0 7px;
  display: grid;
  grid-template-columns: 165px 1fr;
  color: #747896;
}

.info dl div {
  display: flex;
  align-items: center;
  height: 22px;
  white-space: nowrap;
}

.info dd {
  margin: 0 0 0 8px;
}

.info .red {
  color: #c9403f;
}

.dot {
  background: repeating-linear-gradient(90deg, #6a6e8a 0 1px, transparent 1px 2px) bottom / 100% 1px no-repeat;
  padding: 2px 0;
}

.actions {
  display: flex;
  gap: 4px;
}

.actions button {
  flex: 1;
  height: 26px;
  background: #2a3350;
  color: #a8aecb;
}

.book-tools {
  height: 36px;
  margin: 0 12px;
  display: flex;
  align-items: center;
  border-bottom: 1px solid #262a41;
  color: #858aa8;
}

.book-tools button {
  width: 22px;
  height: 22px;
  margin-right: 10px;
  display: flex;
  align-items: center;
  justify-content: center;
}

.book-tools .on {
  background: #283450;
  border-radius: 3px;
}

.book-tools button:nth-child(3) {
  margin-right: 5px;
}

.book-tools select {
  margin-left: auto;
}

.book-tools .caret {
  margin: 0 10px 0 6px;
}

.book-tools select,
.caret,
.gear {
  color: #c9cce2;
}

.switch-row {
  height: 38px;
  display: flex;
  align-items: center;
  padding: 0 12px;
  gap: 2px;
  color: #c9cce2;
}

.switch-row input {
  appearance: none;
  width: 30px;
  height: 12px;
  border-radius: 6px;
  background: #363e66;
  margin-left: auto;
  display: flex;
}

.switch-row input::before {
  content: "";
  width: 12px;
  height: 12px;
  border-radius: 50%;
  background: #dcdff0;
}

.ratio {
  height: 27px;
  display: flex;
  align-items: center;
  padding-left: 12px;
}

.ratio div {
  width: 138px;
}

.ratio span {
  color: #555a74;
  border-bottom: 1px dotted #555a74;
  padding-bottom: 3px;
}

.ratio b {
  color: #c9403f;
  font-weight: 400;
  margin-left: 8px;
}

.thead {
  height: 29px;
  padding: 3px 12px 0;
  display: grid;
  grid-template-columns: 84px 100px 1fr;
  align-items: center;
  color: #bdc1d8;
}

.thead span {
  display: flex;
  align-items: center;
  white-space: nowrap;
}

.thead span + span {
  justify-content: flex-end;
}

.thead svg {
  margin-left: 3px;
}

.thead .dim {
  color: #6d7190;
}

.thead.short {
  height: 28px;
}

.book {
  height: 129px;
  overflow: hidden;
  display: flex;
  align-items: flex-start;
}

.asks {
  align-items: flex-end;
}

table {
  width: 292px;
  table-layout: fixed;
  border-collapse: collapse;
  font-size: 13px;
  color: #c5c8dd;
}

tr {
  height: 20px;
}

td {
  padding: 0;
  text-align: right;
}

td:first-child {
  width: 90px;
  padding-left: 12px;
  text-align: left;
  color: #b83f47;
}

td:nth-child(2) {
  width: 106px;
}

td:last-child {
  padding-right: 4px;
  font-size: 12px;
  font-weight: 500;
}

.asks tr {
  background: linear-gradient(#2f1c2e, #2f1c2e) right center / var(--w) 18px no-repeat;
}

.bids tr {
  background: linear-gradient(#17302f, #17302f) right center / var(--w) 18px no-repeat;
}

.bids td:first-child,
.buy td:first-child {
  color: #2ca57b;
}

.last-price {
  height: 52px;
  background: #1f253a;
  display: flex;
  justify-content: space-between;
  align-items: center;
  padding: 0 12px;
}

.last-price div {
  display: flex;
  flex-direction: column;
}

.last-price strong {
  font-size: 20px;
  line-height: 24px;
  font-weight: 600;
  color: #2ca57b;
}

.last-price small {
  font-size: 12px;
  line-height: 16px;
  color: #565a76;
}

.last-price .chg {
  color: #c9403f;
  text-align: right;
  font-size: 13px;
  line-height: 17px;
}

.trade-tabs {
  height: 36px;
  margin: 0 10px 0 12px;
  border-bottom: 1px solid #262a41;
  display: flex;
  align-items: center;
  font-size: 14px;
  color: #5c607c;
}

.trade-tabs a {
  height: 36px;
  line-height: 36px;
  margin-right: 16px;
}

.trade-tabs .on {
  color: #cfd2e8;
  border-bottom: 1px solid #cfd2e8;
}

.trade-tabs svg {
  color: #b4b8d2;
  margin-left: 6px;
}

.trade-tabs a + svg {
  margin-left: auto;
}

.side > .trades {
  flex: 1 1 0;
  min-height: 0;
  overflow: hidden;
  position: relative;
}

.trades::after {
  content: "";
  position: absolute;
  left: 294px;
  top: 2px;
  width: 4px;
  height: 19px;
  background: #373f68;
}

.trades table {
  background: #20253e;
  border-top: 1px solid #20253e;
}

/* icon rail */
.rail {
  width: 27px;
  margin-left: 4px;
  background: #16192b;
  display: flex;
  flex-direction: column;
  gap: 24px;
  padding: 12px 0 26px 3px;
  overflow: hidden;
  color: #7d81a2;
  flex-shrink: 0;
}

.rail a {
  height: 32px;
  padding: 6px 0 0 8px;
  flex-shrink: 0;
}

.rail .on {
  background: #2b3350;
  border-radius: 4px 0 0 4px;
  color: #c0c6e6;
}

.rail .order {
  border-top: 1px solid #2a2f47;
  height: 66px;
  margin-top: -12px;
  padding: 18px 0 0 4px;
  white-space: nowrap;
}

.rail .order svg {
  margin: 0 0 2px 3px;
}

.rail .push {
  margin-top: auto;
}

.rail .bot {
  padding: 4px 0 0 4px;
}

/* status bar */
.status {
  position: relative;
  height: 36px;
  border-top: 2px solid #0e111e;
  background: #16192b;
  display: flex;
  align-items: center;
  font-size: 13px;
  flex-shrink: 0;
  white-space: nowrap;
  overflow: hidden;
}

.asset {
  width: 40px;
  margin-left: -2px;
}

.risk {
  width: 116px;
  height: 24px;
  font-size: 12px;
  background: #14284a;
  color: #1b86f5;
}

.pen {
  margin: 0 21px 0 33px;
}

.quote {
  display: flex;
  gap: 11px;
  margin-right: 37px;
}

.quote b {
  font-weight: 400;
  color: #d2393e;
}

.quote .green {
  color: #2ca57b;
}

.net {
  margin-left: auto;
  display: flex;
  align-items: center;
  gap: 10px;
  color: #9da2bf;
}

.net svg:first-child text {
  fill: #16192b;
  font-size: 11px;
  font-weight: 700;
}

.net span {
  font-size: 12px;
}

.net time {
  color: #6f76a5;
  margin: 0 -2px 0 36px;
}

.watermark {
  position: absolute;
  right: 9px;
  top: 0;
  height: 34px;
  display: flex;
  align-items: center;
  gap: 7px;
  font-size: 24px;
  color: #e3e3e6;
}

.taskbar {
  height: 9px;
  background: linear-gradient(90deg, #20373f, #1f3440 60%, #1b2a47);
  display: flex;
  justify-content: space-between;
  padding: 0 5px 0 60px;
  overflow: hidden;
  flex-shrink: 0;
}

.task {
  width: 48px;
  background: #4d5f66;
}

.taskbar time {
  color: #fff;
  line-height: 22px;
}
```
